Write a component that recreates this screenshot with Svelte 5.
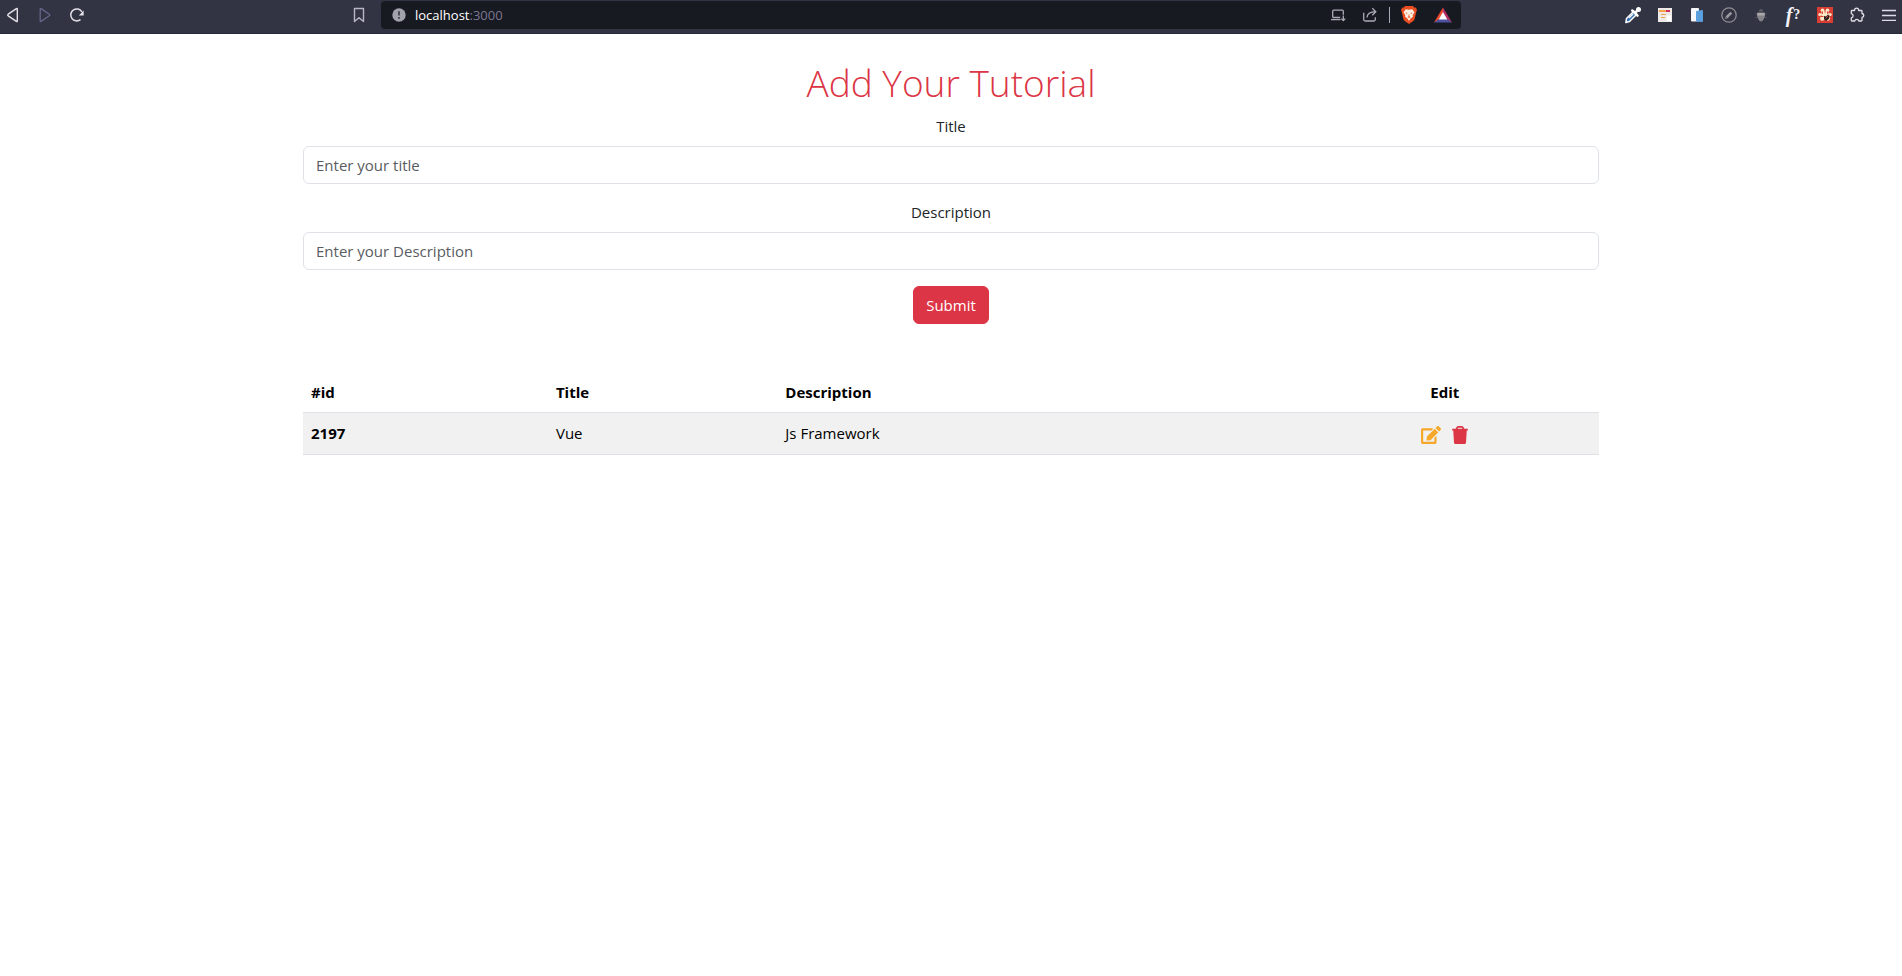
<script>
  let title = $state('');
  let description = $state('');
  let tutorials = $state([{ id: 2197, title: 'Vue', description: 'Js Framework' }]);

  function submit(event) {
    event.preventDefault();
    if (!title) return;
    tutorials.push({ id: tutorials.length + 1, title, description });
    title = '';
    description = '';
  }
  function edit(row) {
    title = row.title;
    description = row.description;
  }
  function remove(id) {
    tutorials = tutorials.filter((row) => row.id !== id);
  }
</script>

<header class="toolbar">
  <nav class="navigation" aria-label="Browser navigation">
    <button class="tool" aria-label="Back">
      <svg width="16" height="16" viewBox="0 0 16 16" fill="none" stroke="#e4e1e8" stroke-width="1.4" stroke-linejoin="round"><path d="M12.3 2v12q0 .8-.9.4L3.2 8.800q-1-.8 0-1.600l8.200-5.600q.9-.4.9.4z" /></svg>
    </button>
    <button class="tool" aria-label="Forward">
      <svg width="16" height="16" viewBox="0 0 16 16" fill="none" stroke="#65658a" stroke-width="1.300" stroke-linejoin="round"><path d="M3.200 2v12q0 .8.9.4l8.200-5.600q1-.8 0-1.600L4.100 1.600q-.9-.4-.9.4z" /></svg>
    </button>
    <button class="tool" aria-label="Reload">
      <svg width="16" height="16" viewBox="0 0 16 16" fill="none" stroke="#e4e1e8" stroke-width="1.500"><path d="M11.500 12.600A6 6 0 1 1 13 5" /><path d="M14.700 3.500v5h-4.900z" fill="#e4e1e8" stroke="none" /></svg>
    </button>
    <button class="tool bookmark" aria-label="Bookmark this page">
      <svg width="16" height="16" viewBox="0 0 16 16" fill="none" stroke="#bab7c4" stroke-width="1.400" stroke-linejoin="round"><path d="M3.500 1.500h9v13L8 10.800l-4.500 3.700z" /></svg>
    </button>
  </nav>

  <div class="address">
    <svg width="14" height="14" viewBox="0 0 14 14" aria-hidden="true"><circle cx="7" cy="7" r="6.700" fill="#a1a2ab" /><path d="M7 3.300v4.200M7 9v1.700" stroke="#3c3e48" stroke-width="1.700" /></svg>
    <p class="url"><strong>localhost</strong>:3000</p>
    <button class="tool" aria-label="Send to device">
      <svg width="16" height="16" viewBox="0 0 16 16" fill="none" stroke="#aaa9b8" stroke-width="1.300"><path d="M2.700 10.500V4.200q0-1 1-1h8.600q1 0 1 1v3.500M1 12.700h9.500M2.700 10.500h7.500" /><path d="M13.300 8.500v5M11.300 11.600l2 2 2-2" /></svg>
    </button>
    <button class="tool share" aria-label="Share">
      <svg width="16" height="16" viewBox="0 0 16 16" fill="none" stroke="#aaa9b8" stroke-width="1.300"><path d="M1.700 5.700v6.800q0 1.500 1.500 1.500h8.600q1.500 0 1.500-1.500v-2.200M5 10.500q.3-5.300 8.500-5.800M10.300 1.300l3.500 3.400-3.500 3.600" /></svg>
    </button>
    <span class="divider"></span>
    <button class="tool shield" aria-label="Brave Shields">
      <svg width="18" height="20" viewBox="0 0 18 20"><path d="M5 1h8l1.500 1.700 1.300-.2 1.200 2.600-.7 1.700-1.600 7q-.4 1.600-1.700 2.500L9 19l-4-2.700q-1.300-.9-1.700-2.500l-1.600-7L1 5.100l1.200-2.600 1.300.2z" fill="#e94d20" /><path d="M5.800 4.200 9 4.700l3.200-.5 2.300 3-1.900 3 .4 1.400-2.600 2.200L9 15.900l-1.400-2.100L5 11.600l.4-1.400-1.900-3z" fill="#fff2e5" /><path d="m5.200 7.200 2.300.7-.5 1.400zM12.800 7.200l-2.300.7.5 1.400zM8.500 9.500h1v1.700l1 .8-1.500 1.200L7.500 12l1-.8z" fill="#e96b3c" /></svg>
    </button>
    <button class="tool" aria-label="Rewards">
      <svg width="18" height="16" viewBox="0 0 18 16"><path d="M9 .5 0 15.500l5.300-3.200L9 6z" fill="#f04b2c" /><path d="m9 .5 9 15-5.300-3.200L9 6z" fill="#b52f66" /><path d="M0 15.500 5.300 12h7.400l5.300 3.500z" fill="#4c52a0" /><path d="m9 5 4.300 7.400H4.700z" fill="#fff" /></svg>
    </button>
  </div>

  <nav class="extensions" aria-label="Extensions">
    <button class="tool" aria-label="Eyedropper">
      <svg width="18" height="18" viewBox="0 0 18 18"><path d="m9.800 5.200 3 3-7.300 7.300-3.600 1 .6-4z" fill="#2c69ad" stroke="#f8f8fb" stroke-width="1.600" stroke-linejoin="round" /><path d="m8.300 4.500 5.200 5.200M11 6.800l3.500-3.500" stroke="#fff" stroke-width="2.500" stroke-linecap="round" /><circle cx="14.500" cy="3.500" r="2.500" fill="#fff" /><path d="m5 12 4-4" stroke="#f8f8fb" stroke-width="1.500" /></svg>
    </button>
    <button class="tool" aria-label="Page layout">
      <svg width="14" height="14" viewBox="0 0 14 14"><path d="M0 0h14v14H0z" fill="#eeeae8" /><path d="M1 2h8v2H1z" fill="#f5a351" /><path d="M8 2h4v2H8z" fill="#d4305d" /><path d="M3 6.500h5M3 9.500h4" stroke="#eda14b" stroke-width="1" /><path d="M8.500 7.500H13V13H8.500z" fill="#fff" /></svg>
    </button>
    <button class="tool" aria-label="Responsive viewer">
      <svg width="14" height="16" viewBox="0 0 14 16"><rect x="1" y="1" width="8" height="13.500" rx="1" fill="#f5f7fb" /><path d="M6.500 4 12 3q1 0 1 1v10q0 1-1 1l-5-.3q-1 0-1-1V5q0-.8.500-1z" fill="#5aa0e0" /></svg>
    </button>
    <button class="tool" aria-label="Style editor">
      <svg width="16" height="16" viewBox="0 0 16 16" fill="none"><circle cx="8" cy="8" r="7.200" stroke="#8e8e94" stroke-width="1.300" /><path d="m5.500 10.500 4.800-4.800" stroke="#98989e" stroke-width="2.600" /><path d="m4.200 11.800.4-2 1.600 1.600z" fill="#98989e" /></svg>
    </button>
    <button class="tool" aria-label="Debugger">
      <svg width="14" height="16" viewBox="0 0 14 16"><path d="M1 6l3 2M13 6l-3 2M1 10.500h3M13 10.500h-3" stroke="#4c4d5a" stroke-width="1" /><path d="M4.700 4.500q0-2.500 2.300-2.500t2.300 2.500z" fill="#5d5d66" /><path d="M3.500 5.500h7q1.200 3.500-.6 6.300Q8.800 14.500 7 14.500t-2.900-2.700Q2.300 9 3.500 5.500z" fill="#85838a" /><path d="M3.500 6h7l.4 2.500H3.100z" fill="#aaa8a8" /></svg>
    </button>
    <button class="tool font-tool" aria-label="Font finder"><i>f</i>?</button>
    <button class="tool" aria-label="Cookie blocker">
      <svg width="16" height="16" viewBox="0 0 16 16"><path d="M0 0h16v16H0z" fill="#d83e34" /><g fill="#fbe8c8"><circle cx="5.500" cy="3.200" r="1.800" /><circle cx="10.500" cy="3.200" r="1.800" /><circle cx="2.800" cy="7.500" r="1.500" /><circle cx="13.200" cy="7.500" r="1.500" /><circle cx="8" cy="7.200" r="3.800" /><circle cx="5.300" cy="11.500" r="2.300" /><circle cx="10.700" cy="11.500" r="2.300" /></g><path d="M5.500 4.500v2.300M8 3.500v2.200M10.500 4.500v2.300M4 9.500h2.500" stroke="#d83e34" stroke-width="1" /><path d="m7 9 2 .5L11 7.500l1.500 1.300-.7 3.200L9 14l-2-2z" fill="#26201f" /><path d="m8.500 11.500 3-3" stroke="#c83f35" /></svg>
    </button>
    <button class="tool" aria-label="Manage extensions">
      <svg width="16" height="16" viewBox="0 0 16 16" fill="none" stroke="#e1dfe7" stroke-width="1.300" stroke-linejoin="round"><path d="M3 3.500h2.500Q5.500 1.200 7.600 1.200t2.100 2.300h2.600q.7 0 .7.700v2.300q1.800.3 1.800 1.900T13 10.300v3q0 .7-.7.7h-2.500q-.3-1.700-2-1.700t-2 1.700H3q-.7 0-.7-.7v-2.500q1.800-.4 1.800-2.100T2.300 6.600V4.200q0-.7.7-.7z" /></svg>
    </button>
    <button class="tool" aria-label="Menu">
      <svg width="14" height="12" viewBox="0 0 14 12" stroke="#dedbe8" stroke-width="1.300"><path d="M0 1.500h14M0 6.500h14M0 11.300h14" /></svg>
    </button>
  </nav>
</header>

<main>
  <h1>Add Your Tutorial</h1>
  <form onsubmit={submit}>
    <label for="title">Title</label>
    <input id="title" type="text" placeholder="Enter your title" bind:value={title} />
    <label for="description">Description</label>
    <input id="description" type="text" placeholder="Enter your Description" bind:value={description} />
    <button class="submit" type="submit">Submit</button>
  </form>

  <table>
    <colgroup><col class="id" /><col class="name" /><col class="about" /><col /></colgroup>
    <thead>
      <tr><th scope="col">#id</th><th scope="col">Title</th><th scope="col">Description</th><th scope="col" class="center">Edit</th></tr>
    </thead>
    <tbody>
      {#each tutorials as row (row.id)}
        <tr>
          <th scope="row">{row.id}</th>
          <td>{row.title}</td>
          <td>{row.description}</td>
          <td>
            <div class="actions">
              <button aria-label="Edit tutorial" onclick={() => edit(row)}>
                <svg width="20" height="18" viewBox="0 0 576 512" fill="#f5a829"><path d="M402.600 83.200l90.200 90.200c3.800 3.800 3.800 10 0 13.800L274.400 405.600l-92.800 10.300c-12.400 1.400-22.900-9.100-21.500-21.500l10.300-92.800L388.800 83.200c3.800-3.800 10-3.800 13.800 0zm162-22.900l-48.800-48.800c-15.200-15.200-39.900-15.200-55.200 0l-35.400 35.400c-3.800 3.800-3.800 10 0 13.800l90.200 90.200c3.800 3.800 10 3.800 13.800 0l35.400-35.400c15.200-15.300 15.200-40 0-55.200zM384 346.200V448H64V128h229.800c3.200 0 6.200-1.300 8.500-3.500l40-40c7.600-7.600 2.200-20.500-8.500-20.500H48C21.500 64 0 85.500 0 112v352c0 26.500 21.500 48 48 48h352c26.500 0 48-21.500 48-48V306.200c0-10.700-12.900-16-20.500-8.500l-40 40c-2.200 2.300-3.500 5.300-3.500 8.500z" /></svg>
              </button>
              <button aria-label="Delete tutorial" onclick={() => remove(row.id)}>
                <svg width="16" height="18" viewBox="0 0 448 512" fill="#dc3545"><path fill-rule="evenodd" d="M432 80h-82.400l-34-56.700A48 48 0 0 0 274.400 0H173.600a48 48 0 0 0-41.200 23.300L98.400 80H16A16 16 0 0 0 0 96v16a16 16 0 0 0 16 16h16l21.200 339a48 48 0 0 0 47.900 45h245.800a48 48 0 0 0 47.900-45L416 128h16a16 16 0 0 0 16-16V96a16 16 0 0 0-16-16zM171.800 50.900A6 6 0 0 1 177 48h94a6 6 0 0 1 5.200 2.900L293.600 80H154.400z" /></svg>
              </button>
            </div>
          </td>
        </tr>
      {/each}
    </tbody>
  </table>
</main>

<style>
  :global(body) {
    margin: 0;
    background: #fff;
    color: #212529;
    font: 15px/24px "Open Sans", "Noto Sans", sans-serif;
  }
  * { box-sizing: border-box; }
  button { font: inherit; cursor: pointer; }

  .toolbar {
    display: flex;
    height: 34px;
    padding: 1px 1px 4px;
    border-bottom: 1px solid #282936;
    background: #323443;
  }
  .navigation, .extensions {
    display: flex;
    align-items: center;
    gap: 8px;
  }
  .navigation { flex: 0 0 380px; padding-right: 10px; }
  .extensions { flex: 0 0 440px; justify-content: flex-end; }
  .bookmark { margin-left: auto; }
  .tool {
    display: flex;
    align-items: center;
    justify-content: center;
    flex: none;
    width: 24px;
    height: 24px;
    padding: 0;
    border: 0;
    background: none;
  }
  .address {
    display: flex;
    align-items: center;
    flex: 1;
    min-width: 0;
    padding: 0 6px 0 11px;
    border-radius: 4px;
    background: #181a21;
  }
  .url {
    flex: 1;
    margin: 0 0 0 9px;
    color: #7b7794;
    font-size: 13px;
  }
  .url strong { color: #fff; font-weight: 400; }
  .share { margin-left: 8px; }
  .divider { width: 1px; height: 16px; margin: 0 7px; background: #aaa9b8; }
  .shield { margin-right: 10px; }
  .font-tool {
    gap: 1px;
    color: #f4f2f7;
    font: 700 14px/20px "Liberation Serif", serif;
  }
  .font-tool i { font-size: 20px; }

  main {
    max-width: 1320px;
    margin: 0 auto;
    padding: 24px 12px;
  }
  h1 {
    margin: 0 0 6px;
    color: #dc3545;
    font-size: 37px;
    font-weight: 300;
    line-height: 50px;
    text-align: center;
  }
  form {
    display: flex;
    flex-direction: column;
    align-items: center;
    margin-bottom: 48px;
  }
  label { margin-bottom: 8px; }
  input {
    width: 100%;
    height: 38px;
    margin: 0 0 16px;
    padding: 6px 12px;
    border: 1px solid #dee2e6;
    border-radius: 6px;
    background: #fff;
    color: #212529;
    font: inherit;
  }
  input::placeholder { color: #595c5f; opacity: 1; }
  .submit {
    height: 38px;
    padding: 6px 12px;
    border: 1px solid #dc3545;
    border-radius: 6px;
    background: #dc3545;
    color: #fff;
  }
  table {
    width: 100%;
    border-collapse: collapse;
    table-layout: fixed;
    color: #000;
  }
  .id { width: 18.9%; }
  .name { width: 17.7%; }
  .about { width: 39.6%; }
  th, td {
    padding: 8px;
    border-bottom: 1px solid #dee2e6;
    text-align: left;
    vertical-align: top;
  }
  th { font-weight: 700; }
  .center { text-align: center; }
  tbody tr { background: #f1f1f1; }
  .actions {
    display: flex;
    align-items: flex-end;
    justify-content: center;
    gap: 11px;
    height: 25px;
  }
  .actions button {
    display: flex;
    padding: 0 0 2px;
    border: 0;
    background: none;
  }
</style>
